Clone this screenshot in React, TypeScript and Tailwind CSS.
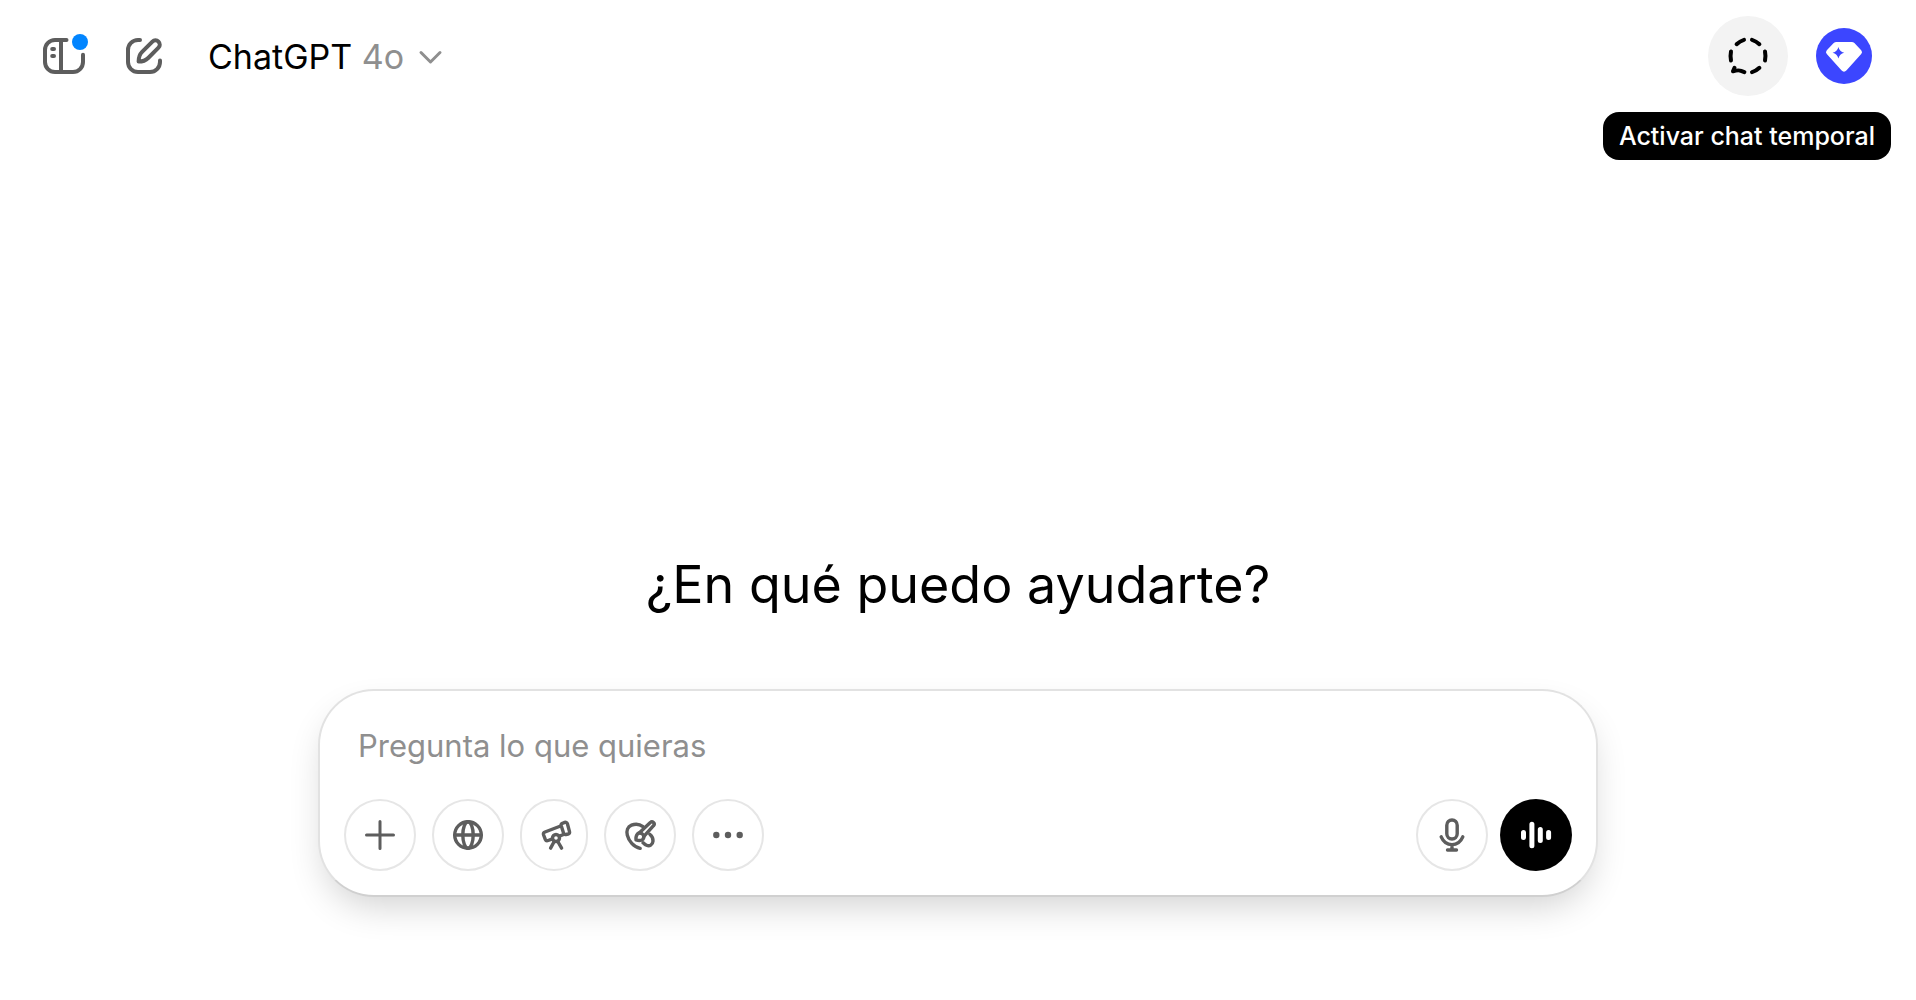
import React from 'react';

interface IconProps {
  children: React.ReactNode;
  size?: 'md' | 'lg';
}

function Icon({ children, size = 'md' }: IconProps) {
  return (
    <svg
      className={size === 'lg' ? 'size-12 shrink-0' : 'size-9 shrink-0'}
      viewBox={size === 'lg' ? '0 0 48 48' : '0 0 36 36'}
      fill="none"
      stroke="currentColor"
      strokeWidth={size === 'lg' ? 4 : 3.4}
      strokeLinecap="round"
      strokeLinejoin="round"
      aria-hidden="true"
    >
      {children}
    </svg>
  );
}

const tools = [
  {
    label: 'Adjuntar',
    width: 'w-[72px]',
    icon: <path strokeWidth={3} d="M18 4.5v27M4.5 18h27" />,
  },
  {
    label: 'Buscar en la web',
    width: 'w-[72px]',
    icon: (
      <>
        <circle cx="18" cy="18" r="13.3" />
        <ellipse cx="18" cy="18" rx="5.2" ry="13.3" />
        <path d="M5 18h26" />
      </>
    ),
  },
  {
    label: 'Investigar a fondo',
    width: 'w-[68px]',
    icon: (
      <>
        <path d="M15.8 22.2l-3.6 1.3a2.4 2.4 0 0 1-3-1.3l-1.6-4.2a2.4 2.4 0 0 1 1.4-3L24.6 9" />
        <path d="M26.8 6.2l1.9-.8a2 2 0 0 1 2.7 1.3l2.1 7.9a2 2 0 0 1-1.4 2.4l-2.2.5a2 2 0 0 1-2.3-1.3l-2.3-7.3a2.2 2.2 0 0 1 1.5-2.7z" />
        <path d="M24 18.8l3.6-1.3" />
        <circle cx="20" cy="21" r="3.5" />
        <path d="M18.2 24.5l-3.6 6.6M21.8 24.5l3.8 6.6" />
      </>
    ),
  },
  {
    label: 'Crear una imagen',
    width: 'w-[72px]',
    icon: (
      <>
        <path d="M21 9.6C17.5 7 13 6.8 9.5 8.2C5.5 9.8 4.3 14 5.3 18.2C6.7 24 11.5 30 18.2 31.4" />
        <path d="M27.8 17.2C30 19 31.2 21.5 31 24.2C30.7 28 27.5 29.5 24.6 28.3C23 27.6 22.3 26.6 21 25.8" />
        <path d="M18 15.2L28.3 5.6a2.2 2.2 0 0 1 3.2 3.1L21.9 19.4" />
        <path d="M14 22.8c-.2-2 .1-4.5 1.5-6a3.9 3.9 0 0 1 5.5 5.4c-1.7 1.4-5 1.3-7 .6z" />
      </>
    ),
  },
  {
    label: 'Más herramientas',
    width: 'w-[72px]',
    icon: (
      <g fill="currentColor" stroke="none">
        <circle cx="6.3" cy="18" r="3.2" />
        <circle cx="18" cy="18" r="3.2" />
        <circle cx="29.7" cy="18" r="3.2" />
      </g>
    ),
  },
];

function Header() {
  return (
    <header className="flex items-center justify-between pt-4 pl-10 pr-11">
      <div className="flex items-center">
        <button type="button" aria-label="Abrir barra lateral" className="relative mr-8 text-[#5d5d5d]">
          <Icon size="lg">
            <path d="M26.5 8H15A10 10 0 0 0 5 18v12a10 10 0 0 0 10 10h18a10 10 0 0 0 10-10v-7.3M21 8v32" />
            <path d="M12.2 17h1.8M12.2 24h1.8" />
          </Icon>
          <span className="absolute right-0 top-0.5 size-4 rounded-full bg-[#0285ff]" />
        </button>
        <button type="button" aria-label="Nuevo chat" className="mr-10 text-[#5d5d5d]">
          <Icon size="lg">
            <path d="M20 8h-2A10 10 0 0 0 8 18v12a10 10 0 0 0 10 10h12a10 10 0 0 0 10-10v-1.6" />
            <path d="M18.6 29.6c0-4.5 1-7.2 3.5-9.7L32.4 9.6a4.3 4.3 0 0 1 6.1 6.1L28.2 26c-2.5 2.5-5.1 3.6-9.6 3.6z" />
          </Icon>
        </button>
        <button type="button" className="flex items-center pt-0.5 text-[34px] leading-10">
          <span>
            ChatGPT <span className="text-[#8f8f8f]">4o</span>
          </span>
          <svg
            className="ml-3 h-6 w-7 text-[#8f8f8f]"
            viewBox="0 0 28 24"
            fill="none"
            stroke="currentColor"
            strokeWidth="3"
            strokeLinecap="round"
            strokeLinejoin="round"
            aria-hidden="true"
          >
            <path d="M5 7.5l9.5 9.5L24 7.5" />
          </svg>
        </button>
      </div>

      <div className="flex items-center gap-7">
        <button
          type="button"
          aria-describedby="temporary-chat-tip"
          aria-label="Chat temporal"
          className="flex size-20 items-center justify-center rounded-full bg-[#f3f3f3]"
        >
          <Icon size="lg">
            <path d="M12.6 12.2q3.3-3.2 7.4-4.4M28 7.8q4.1 1.2 7.4 4.4M41 19.5q.9 4.5 0 9M35.4 35.8q-3.3 3.2-7.4 4.4M7 28.5q-.9-4.5 0-9" />
            <path d="M10.5 35.8l-1.5 3.4M9 39.2c3.5-.9 6-1.2 8-.4l3.4 1.3" />
          </Icon>
        </button>
        <button type="button" aria-label="Perfil" className="size-14 rounded-full bg-[#3c46ff]">
          <svg className="size-14" viewBox="0 0 56 56" aria-hidden="true">
            <path
              fill="#fff"
              d="M20.5 14h15.2a4 4 0 0 1 2.7 1l6.8 7.3a2.8 2.8 0 0 1 0 3.8L30.6 42.3a3.6 3.6 0 0 1-5.2 0L10.8 26.1a2.8 2.8 0 0 1 0-3.8l6.9-7.2a4 4 0 0 1 2.8-1.1z"
            />
            <path
              fill="#3c46ff"
              d="M22.4 19q1.1 4.7 5.8 5.8-4.7 1.1-5.8 5.8-1.1-4.7-5.8-5.8 4.7-1.1 5.8-5.8z"
            />
          </svg>
        </button>
      </div>

      <div
        id="temporary-chat-tip"
        role="tooltip"
        className="absolute right-[25px] top-28 rounded-2xl bg-black px-4 py-2 text-[25px] leading-8 font-medium text-white"
      >
        Activar chat temporal
      </div>
    </header>
  );
}

function Composer() {
  return (
    <form className="w-full max-w-[1280px] rounded-[56px] border-2 border-[#e2e2e2] border-b-[#d0d0d0] bg-white px-6 pb-6 pt-[30px] shadow-[0_16px_36px_-8px_rgba(0,0,0,0.19)]">
      <input
        type="text"
        aria-label="Pregunta lo que quieras"
        placeholder="Pregunta lo que quieras"
        className="mb-[30px] block h-12 w-full px-3.5 text-[31px] outline-none placeholder:text-[#8f8f8f]"
      />
      <div className="flex items-center justify-between">
        <div className="flex gap-4">
          {tools.map(tool => (
            <button
              key={tool.label}
              type="button"
              aria-label={tool.label}
              className={`flex h-[72px] items-center justify-center rounded-full border-2 border-[#e6e6e6] text-[#5d5d5d] ${tool.width}`}
            >
              <Icon>{tool.icon}</Icon>
            </button>
          ))}
        </div>
        <div className="flex gap-3">
          <button
            type="button"
            aria-label="Dictar"
            className="flex size-[72px] items-center justify-center rounded-full border-2 border-[#e6e6e6] text-[#5d5d5d]"
          >
            <Icon>
              <rect x="12.8" y="3" width="10.4" height="19" rx="5.2" />
              <path d="M7.2 19.8c2 4.7 5.8 7.8 10.8 7.8s8.800-3.100 10.800-7.800M18 28v5M13.5 33h9" />
            </Icon>
          </button>
          <button
            type="button"
            aria-label="Modo de voz"
            className="flex size-[72px] items-center justify-center rounded-full bg-black text-white"
          >
            <Icon>
              <path strokeWidth={5} d="M5.5 15.4v5.2M13.9 7.3v21.4M22.3 12.4v11.2M30.6 15.4v5.2" />
            </Icon>
          </button>
        </div>
      </div>
    </form>
  );
}

export default function App() {
  return (
    <div className="relative flex min-h-screen flex-col bg-white font-['Inter',sans-serif] text-black">
      <Header />
      <main className="flex flex-1 flex-col items-center justify-end px-10 pb-[103px]">
        <h1 className="mb-16 text-[52px] leading-[80px]">¿En qué puedo ayudarte?</h1>
        <Composer />
      </main>
    </div>
  );
}
